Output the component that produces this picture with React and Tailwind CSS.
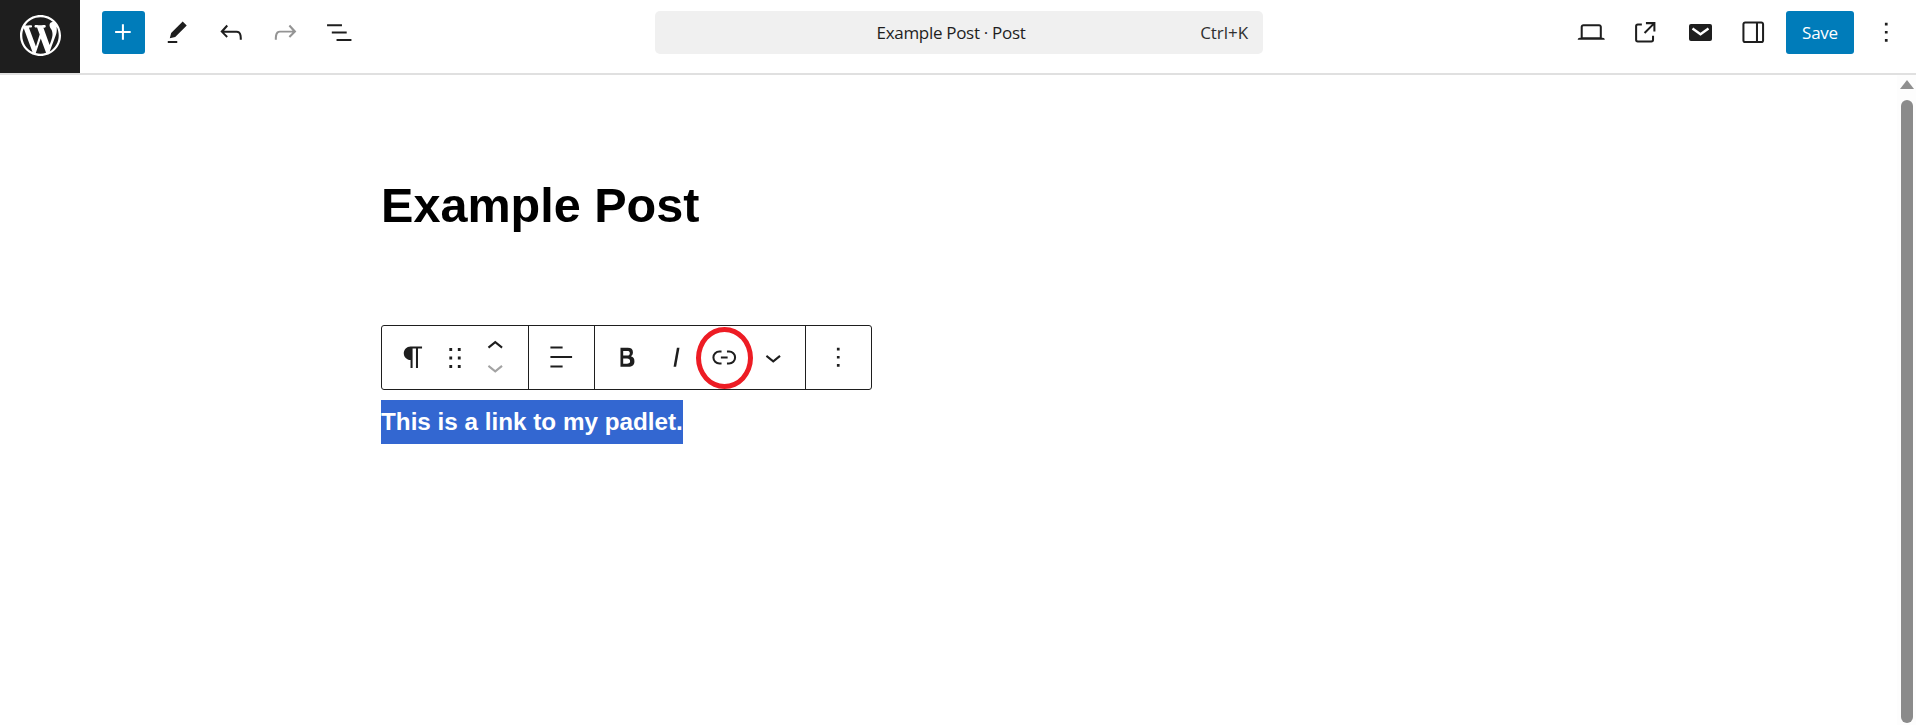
import React from 'react';

const Icon = ({ d, className = 'w-[32.5px] h-[32.5px]', fill = '#1e1e1e' }) => (
    <svg viewBox="0 0 24 24" className={className} fill={fill}>
        <path d={d} />
    </svg>
);

const paths = {
    plus: 'M11 12.5V17.5H12.5V12.5H17.5V11H12.5V6H11V11H6V12.5H11Z',
    pen: 'm19 7-3-3-8.5 8.5-1 4 4-1L19 7Zm-7 11.5H5V20h7v-1.5Z',
    undo: 'M18.3 11.7c-.6-.6-1.4-.9-2.3-.9H6.7l2.9-3.3-1.1-1-4.5 5L8.5 16l1-1-2.7-2.7H16c.5 0 .9.2 1.3.5 1 1 1 3.4 1 4.5v.3h1.5v-.2c0-1.5 0-4.3-1.5-5.7z',
    redo: 'M15.6 6.5l-1.1 1 2.9 3.3H8c-.9 0-1.7.3-2.3.9-1.4 1.5-1.4 4.2-1.4 5.6v.2h1.5v-.3c0-1.1 0-3.5 1-4.5.3-.3.7-.5 1.3-.5h9.2L14.5 15l1.1 1.1 4.6-4.6-4.6-5z',
    listView: 'M3 6h11v1.5H3V6Zm3.5 5.5h11V13h-11v-1.5ZM21 17H10v1.5h11V17Z',
    desktop: 'M20.5 16h-.7V8c0-1.1-.9-2-2-2H6.2c-1.1 0-2 .9-2 2v8h-.7c-.8 0-1.5.7-1.5 1.5h20c0-.8-.7-1.5-1.5-1.5zM5.7 8c0-.3.2-.5.5-.5h11.6c.3 0 .5.2.5.5v7.6H5.7V8z',
    external: 'M19.5 4.5h-7V6h4.44l-5.97 5.97 1.06 1.06L18 7.06v4.44h1.5v-7Zm-13 1a2 2 0 0 0-2 2v10a2 2 0 0 0 2 2h10a2 2 0 0 0 2-2v-3H17v3a.5.5 0 0 1-.5.5h-10a.5.5 0 0 1-.5-.5v-10a.5.5 0 0 1 .5-.5h3V5.5h-3Z',
    sidebar: 'M18 4H6c-1.1 0-2 .9-2 2v12c0 1.1.9 2 2 2h12c1.1 0 2-.9 2-2V6c0-1.1-.9-2-2-2zm-4 14.5H6c-.3 0-.5-.2-.5-.5V6c0-.3.2-.5.5-.5h8v13zm4.5-.5c0 .3-.2.5-.5.5h-2.5v-13H18c.3 0 .5.2.5.5v12z',
    more: 'M13 19h-2v-2h2v2zm0-6h-2v-2h2v2zm0-6h-2V5h2v2z',
    paragraph: 'm9.99609 14v-.2251l.00391.0001v6.225h1.5v-14.5h2.5v14.5h1.5v-14.5h3v-1.5h-8.50391c-2.76142 0-5 2.23858-5 5 0 2.7614 2.23858 5 5 5z',
    drag: 'M8 7h2V5H8v2zm0 6h2v-2H8v2zm0 6h2v-2H8v2zm6-14v2h2V5h-2zm0 8h2v-2h-2v2zm0 6h2v-2h-2v2z',
    alignLeft: 'M13 5.5H4V4h9v1.5Zm7 7H4V11h16v1.5Zm-7 7H4V18h9v1.5Z',
    bold: 'M14.7 11.3c1-.6 1.5-1.6 1.5-3 0-2.3-1.3-3.3-3.8-3.3H7v14h5.8c1.4 0 2.5-.3 3.3-1 .8-.7 1.2-1.7 1.2-2.9.1-1.9-.8-3.3-2.6-3.8zm-5.7-4h3c.6 0 1.1.1 1.4.4.3.3.5.7.5 1.3 0 .6-.2 1-.5 1.3-.3.3-.8.4-1.4.4H9V7.3zm4.4 9c-.4.3-.9.5-1.6.5H9v-3.9h2.9c.7 0 1.2.2 1.6.5s.6.8.6 1.5-.2 1.1-.6 1.4z',
    italic: 'M12.5 5L10 19h1.9l2.5-14z',
    link: 'M10 17.389H8.444A5.194 5.194 0 1 1 8.444 7H10v1.5H8.444a3.694 3.694 0 0 0 0 7.389H10v1.5ZM14 7h1.556a5.194 5.194 0 0 1 0 10.39H14v-1.5h1.556a3.694 3.694 0 0 0 0-7.39H14V7Zm-4.5 6h5v-1.5h-5V13Z',
    chevronUp: 'M6.5 12.4L12 8l5.5 4.4-.9 1.2L12 10l-4.5 3.6-1-1.2z',
    chevronDown: 'M17.5 11.6L12 16l-5.5-4.4.9-1.2L12 14l4.5-3.6 1 1.2z',
};

const wpLogo = 'M20 10c0-5.51-4.49-10-10-10C4.48 0 0 4.49 0 10c0 5.52 4.48 10 10 10 5.51 0 10-4.48 10-10zM7.78 15.37L4.37 6.22c.55-.02 1.17-.08 1.17-.08.5-.06.44-1.13-.06-1.11 0 0-1.45.11-2.37.11-.18 0-.37 0-.58-.01C4.12 2.69 6.87 1.11 10 1.11c2.33 0 4.45.87 6.05 2.34-.68-.11-1.65.39-1.65 1.58 0 .74.45 1.36.9 2.1.35.61.55 1.36.55 2.46 0 1.49-1.4 5-1.4 5l-3.03-8.37c.54-.02.82-.17.82-.17.5-.05.44-1.25-.06-1.22 0 0-1.44.12-2.38.12-.87 0-2.33-.12-2.33-.12-.5-.03-.56 1.2-.06 1.22l.92.08 1.26 3.41zM17.41 10c.24-.64.74-1.87.43-4.25.7 1.29 1.05 2.71 1.05 4.25 0 3.29-1.73 6.24-4.4 7.78.97-2.59 1.94-5.2 2.92-7.78zM6.1 18.09C3.12 16.65 1.11 13.53 1.11 10c0-1.3.23-2.48.72-3.59C3.25 10.3 4.67 14.2 6.1 18.09zm4.03-6.63l2.58 6.98c-.86.29-1.76.45-2.71.45-.79 0-1.57-.11-2.29-.33.81-2.38 1.62-4.74 2.42-7.1z';

const TopButton = ({ className = '', children }) => (
    <button className={`w-[54px] h-[43px] flex items-center justify-center ${className}`}>{children}</button>
);

const Header = () => (
    <header className="h-[75px] shrink-0 flex items-start border-b-2 border-[#e0e0e0] font-['Open_Sans',sans-serif] text-[#1e1e1e]">
        <div className="w-[80px] h-[73px] bg-[#1e1e1e] flex items-center justify-center pb-[2px]">
            <svg viewBox="0 0 20 20" className="w-[41px] h-[41px]" fill="#fff">
                <path d={wpLogo} />
            </svg>
        </div>
        <div className="flex items-center mt-[11px] ml-[22px]">
            <button className="w-[43px] h-[43px] mr-[5px] bg-[#007cba] rounded-[3px] flex items-center justify-center">
                <Icon d={paths.plus} fill="#fff" />
            </button>
            <TopButton><Icon d={paths.pen} /></TopButton>
            <TopButton><Icon d={paths.undo} /></TopButton>
            <TopButton><Icon d={paths.redo} fill="#949494" /></TopButton>
            <TopButton><Icon d={paths.listView} /></TopButton>
        </div>
        <div className="relative w-[608px] h-[43px] mt-[11px] ml-[289px] pr-[16px] bg-[#f0f0f0] rounded-[5px] flex items-center justify-center text-[17px] tracking-[-0.3px]">
            <span>Example Post · Post</span>
            <span className="absolute right-[15px] top-[10px] leading-[24px] tracking-[-0.05px] text-[#2f2f2f]">Ctrl+K</span>
        </div>
        <div className="ml-auto flex items-center mt-[11px] pr-[3px]">
            <TopButton><Icon d={paths.desktop} /></TopButton>
            <TopButton><Icon d={paths.external} /></TopButton>
            <TopButton className="pl-[2px]">
                <svg viewBox="0 0 23 17" className="w-[23px] h-[17px]">
                    <rect width="23" height="17" rx="2" fill="#1e1e1e" />
                    <path d="M3.5 4.5 11.5 10.2 19.5 4.5" fill="none" stroke="#fff" strokeWidth="2.4" />
                </svg>
            </TopButton>
            <TopButton><Icon d={paths.sidebar} /></TopButton>
            <button className="w-[68px] h-[43px] ml-[6px] mr-[5px] bg-[#007cba] rounded-[3px] text-white text-[17px] tracking-[-0.25px]">Save</button>
            <TopButton><Icon d={paths.more} /></TopButton>
        </div>
    </header>
);

const ToolButton = ({ className, children }) => (
    <button className={`h-full flex items-center justify-center ${className}`}>{children}</button>
);

const BlockToolbar = () => (
    <div className="relative w-[491px] h-[65px] flex border border-[#1e1e1e] rounded-[3px] bg-white">
        <div className="w-[147px] h-full flex pl-[10px] border-r border-[#1e1e1e]">
            <ToolButton className="w-[43px]"><Icon d={paths.paragraph} /></ToolButton>
            <ToolButton className="w-[40px]"><Icon d={paths.drag} className="w-[34px] h-[34px]" /></ToolButton>
            <ToolButton className="w-[40px]">
                <div className="flex flex-col items-center -space-y-[12px] -mt-[2px]">
                    <Icon d={paths.chevronUp} />
                    <Icon d={paths.chevronDown} fill="#a3a3a3" />
                </div>
            </ToolButton>
        </div>
        <div className="w-[66px] h-full flex border-r border-[#1e1e1e]">
            <ToolButton className="w-full"><Icon d={paths.alignLeft} /></ToolButton>
        </div>
        <div className="w-[211px] h-full flex pl-[8px] border-r border-[#1e1e1e]">
            <ToolButton className="w-[48.5px]"><Icon d={paths.bold} /></ToolButton>
            <ToolButton className="w-[48.5px]"><Icon d={paths.italic} /></ToolButton>
            <ToolButton className="w-[48.5px]"><Icon d={paths.link} /></ToolButton>
            <ToolButton className="w-[48.5px]"><Icon d={paths.chevronDown} /></ToolButton>
        </div>
        <div className="flex-1 h-full flex">
            <ToolButton className="w-full"><Icon d={paths.more} /></ToolButton>
        </div>
        {/* red annotation circle */}
        <div className="absolute left-[314px] top-[1px] w-[57px] h-[62px] border-[5px] border-[#ed1c24] rounded-[50%]"></div>
    </div>
);

const Scrollbar = () => (
    <div className="w-[19px] shrink-0 flex flex-col items-center bg-[#fdfdfd] pl-[1px]">
        <div className="mt-[5px] w-0 h-0 border-x-[7px] border-x-transparent border-b-[9px] border-b-[#8f8f8f]"></div>
        <div className="mt-[11px] mb-[2px] w-[12px] flex-1 rounded-full bg-[#8b8b8b]"></div>
    </div>
);

const App = () => (
    <div className="h-screen w-full overflow-hidden flex flex-col bg-white">
        <Header />
        <div className="flex-1 flex min-h-0">
            <main className="flex-1 pl-[381px] font-['Liberation_Sans',sans-serif]">
                <h1 className="mt-[101px] text-[48.55px] leading-[58px] font-bold text-black">Example Post</h1>
                <div className="mt-[91px]">
                    <BlockToolbar />
                </div>
                <p className="mt-[10px] w-fit h-[44px] bg-[#3367d1] text-white text-[24.25px] leading-[44px] font-bold">This is a link to my padlet.</p>
            </main>
            <Scrollbar />
        </div>
    </div>
);

export default App;
